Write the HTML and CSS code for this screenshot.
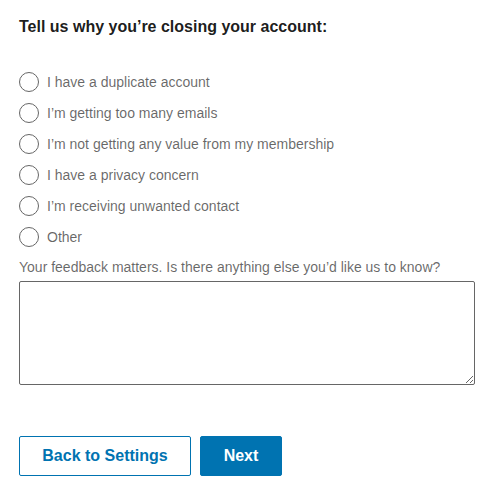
FILE: index.html
```html
<!DOCTYPE html>
<html lang="en">
<head>
<meta charset="utf-8">
<title>Close account</title>
<link rel="stylesheet" href="styles.css">
</head>
<body>
<form class="page">
  <h2 class="title">Tell us why you’re closing your account:</h2>
  <ul class="options">
    <li class="option"><span class="radio"></span><span class="option-text">I have a duplicate account</span></li>
    <li class="option"><span class="radio"></span><span class="option-text">I’m getting too many emails</span></li>
    <li class="option"><span class="radio"></span><span class="option-text">I’m not getting any value from my membership</span></li>
    <li class="option"><span class="radio"></span><span class="option-text">I have a privacy concern</span></li>
    <li class="option"><span class="radio"></span><span class="option-text">I’m receiving unwanted contact</span></li>
    <li class="option"><span class="radio"></span><span class="option-text">Other</span></li>
  </ul>
  <label class="feedback-label" for="fb">Your feedback matters. Is there anything else you’d like us to know?</label>
  <textarea id="fb" class="feedback"></textarea>
  <div class="actions">
    <button type="button" class="btn btn-secondary">Back to Settings</button>
    <button type="button" class="btn btn-primary">Next</button>
  </div>
</form>
</body>
</html>
```

FILE: styles.css
```css
html, body {
  margin: 0;
  padding: 0;
  background: #fff;
}
body {
  font-family: "Liberation Sans", Arial, sans-serif;
}
.page {
  padding: 17px 19px 0 19px;
  display: flex;
  flex-direction: column;
}
.title {
  margin: 0;
  font-size: 16px;
  line-height: 20px;
  font-weight: bold;
  color: rgba(0, 0, 0, 0.9);
}
.options {
  list-style: none;
  margin: 29px 0 0 0;
  padding: 0;
  display: flex;
  flex-direction: column;
}
.option {
  height: 31px;
  display: flex;
  align-items: center;
  gap: 8px;
}
.radio {
  width: 18px;
  height: 18px;
  border: 1px solid #666;
  border-radius: 50%;
  box-sizing: content-box;
  flex: none;
}
.option-text {
  font-size: 14px;
  line-height: 20px;
  color: rgba(0, 0, 0, 0.6);
}
.feedback-label {
  margin-top: 6px;
  font-size: 14px;
  line-height: 18px;
  color: rgba(0, 0, 0, 0.6);
}
.feedback {
  margin: 5px 0 0 0;
  width: 456px;
  height: 104px;
  box-sizing: border-box;
  border: 1px solid #666;
  border-radius: 2px;
  padding: 4px;
  font-family: inherit;
  font-size: 14px;
  resize: both;
}
.actions {
  margin-top: 51px;
  display: flex;
  gap: 9px;
}
.btn {
  height: 40px;
  box-sizing: border-box;
  border-radius: 2px;
  font-family: "Liberation Sans", Arial, sans-serif;
  font-size: 16px;
  font-weight: bold;
  padding: 0;
  white-space: nowrap;
  cursor: pointer;
}
.btn-secondary {
  width: 172px;
  background: #fff;
  color: #0073b1;
  border: 1px solid #0073b1;
}
.btn-primary {
  width: 82px;
  background: #0073b1;
  color: #fff;
  border: 1px solid #0073b1;
}
```
